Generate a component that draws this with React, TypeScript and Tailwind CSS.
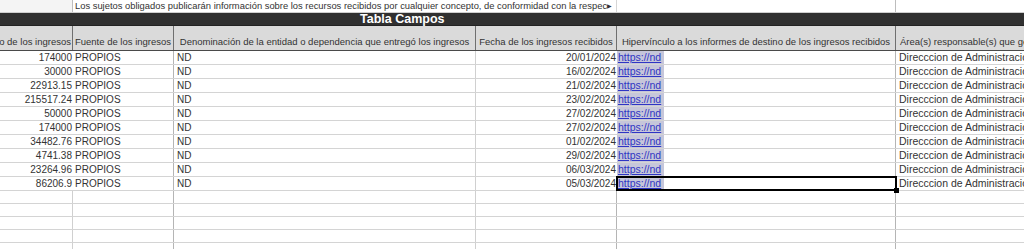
// Spreadsheet view: "Tabla Campos" income records sheet.

const COLS = 'grid-cols-[73px_101px_302px_141px_279px_220px]';

const ROWS = [
  { monto: '174000', fecha: '20/01/2024' },
  { monto: '30000', fecha: '16/02/2024' },
  { monto: '22913.15', fecha: '21/02/2024' },
  { monto: '215517.24', fecha: '23/02/2024' },
  { monto: '50000', fecha: '27/02/2024' },
  { monto: '174000', fecha: '27/02/2024' },
  { monto: '34482.76', fecha: '01/02/2024' },
  { monto: '4741.38', fecha: '29/02/2024' },
  { monto: '23264.96', fecha: '06/03/2024' },
  { monto: '86206.9', fecha: '05/03/2024' },
];

const HEADERS = [
  'Monto de los ingresos',
  'Fuente de los ingresos',
  'Denominación de la entidad o dependencia que entregó los ingresos',
  'Fecha de los ingresos recibidos',
  'Hipervínculo a los informes de destino de los ingresos recibidos',
  'Área(s) responsable(s) que generan',
];

export default function App() {
  return (
    <div className="h-[249px] w-[1024px] overflow-hidden bg-white font-['Liberation_Sans',Arial,sans-serif] text-[9.5px] leading-none text-[#333]">
      {/* descriptive row */}
      <div className={`grid h-[13px] ${COLS} border-b border-[#cfcfcf]`}>
        <div className="border-r border-[#bdbdbd] bg-[#f4f4f4]" />
        <div className="col-span-3 flex items-center whitespace-nowrap border-r border-[#d6d6d6] pl-[2px] text-[9.4px]">
          <span className="min-w-0 overflow-hidden">
            Los sujetos obligados publicarán información sobre los recursos recibidos por cualquier concepto, de conformidad con la respec
          </span>
          <span className="shrink-0 text-[6px]">▶</span>
        </div>
        <div className="border-r border-[#bdbdbd]" />
        <div />
      </div>

      {/* title band */}
      <div className="flex h-[13px] items-center border-b border-[#222] bg-[#303030] pl-[360px] text-[12.5px] font-bold text-white">
        Tabla Campos
      </div>

      {/* column headers */}
      <div className={`grid h-[25px] ${COLS} border-b border-[#4a4a4a] bg-[#dadada]`}>
        {HEADERS.map((h, i) => (
          <div
            key={h}
            className={`flex items-end overflow-hidden whitespace-nowrap pb-[4px] ${
              i === 0 ? 'justify-end pr-[1px]' : i === 5 ? 'justify-start pl-[4px]' : 'justify-center'
            } ${i < 5 ? 'border-r border-[#6f6f6f]' : ''}`}
          >
            {h}
          </div>
        ))}
      </div>

      {/* data rows */}
      {ROWS.map((r, idx) => {
        const selected = idx === ROWS.length - 1;
        return (
          <div key={idx} className={`grid h-[14px] ${COLS} border-b border-[#d4d4d4] text-[10px]`}>
            <div className="flex items-center justify-end pr-[1px]">{r.monto}</div>
            <div className="flex items-center border-r border-[#b5b5b5] pl-[2px]">PROPIOS</div>
            <div className="flex items-center border-r border-[#d0d0d0] pl-[3px]">ND</div>
            <div className="flex items-center justify-end pr-[1px]">{r.fecha}</div>
            <div
              className={`relative flex items-stretch ${
                selected ? 'outline-2 -outline-offset-1 outline-black' : 'border-r border-[#b5b5b5]'
              }`}
            >
              <span className="flex items-center bg-[#c6c6da] pl-[1px] pr-[3px] text-[10.5px] text-[#2f35c4] underline">
                https://nd
              </span>
              {selected && <span className="absolute -bottom-[3px] -right-[3px] h-[5px] w-[5px] bg-black" />}
            </div>
            <div className="flex items-center overflow-hidden whitespace-nowrap pl-[3px] text-[10.5px]">
              Direcccion de Administracion
            </div>
          </div>
        );
      })}

      {/* empty rows */}
      {[0, 1, 2, 3, 4].map((i) => (
        <div key={i} className={`grid h-[13px] ${COLS} border-b border-[#d4d4d4]`}>
          <div className="border-r border-[#d0d0d0]" />
          <div className="border-r border-[#b5b5b5]" />
          <div className="border-r border-[#d0d0d0]" />
          <div className="border-r border-[#b5b5b5]" />
          <div className="border-r border-[#b5b5b5]" />
          <div />
        </div>
      ))}
    </div>
  );
}
